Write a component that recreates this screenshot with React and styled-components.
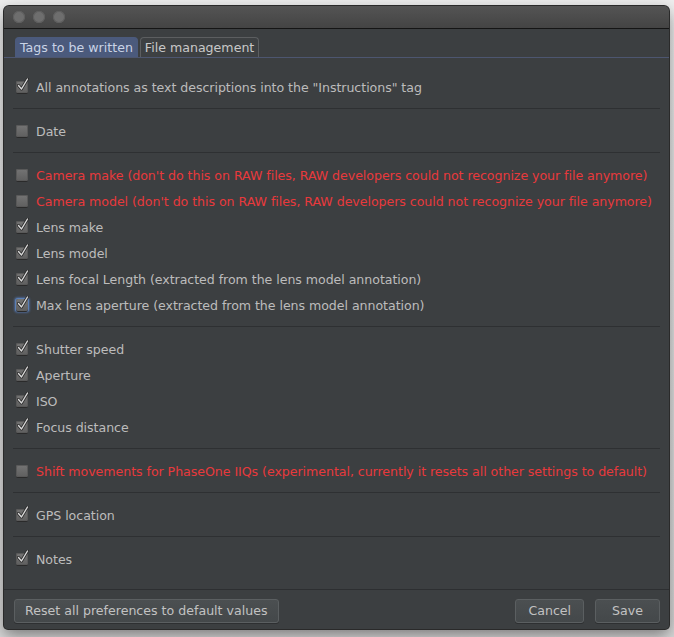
import React from "react";
import styled, { createGlobalStyle } from "styled-components";

const GlobalStyle = createGlobalStyle`
  html, body {
    margin: 0;
    padding: 0;
    background: #e6e6e6;
  }
  body {
    font-family: "DejaVu Sans", "Liberation Sans", sans-serif;
  }
`;

const Desk = styled.div`
  width: 674px;
  height: 637px;
  padding: 6px 5px 0 4px;
  box-sizing: border-box;
  background: linear-gradient(#eeeeee, #d9d9d9);
`;

const Window = styled.div`
  width: 665px;
  height: 623px;
  display: flex;
  flex-direction: column;
  background: #3c3f41;
  border-radius: 5px 5px 4px 4px;
  overflow: hidden;
  box-shadow: 0 0 0 1px #2a2a2a, 0 6px 16px rgba(0, 0, 0, 0.45);
`;

const TitleBar = styled.div`
  height: 22px;
  flex: none;
  display: flex;
  align-items: center;
  gap: 8px;
  padding-left: 9px;
  background: linear-gradient(#545454, #444444);
  border-bottom: 1px solid #151515;
`;

const Light = styled.span`
  width: 12px;
  height: 12px;
  border-radius: 50%;
  background: #6e6e6e;
  box-shadow: inset 0 0 0 1px #5e5e5e;
`;

const TabStrip = styled.div`
  display: flex;
  align-items: flex-end;
  gap: 2px;
  padding: 8px 0 0 11px;
  border-bottom: 1px solid #4d5670;
`;

const Tab = styled.div`
  height: 19px;
  padding: 0 4px;
  display: flex;
  align-items: center;
  font-size: 12.6px;
  color: ${(p) => (p.$active ? "#c9d3e6" : "#c8c8c8")};
  background: ${(p) => (p.$active ? "#4b5a7c" : "#3d4042")};
  border: 1px solid ${(p) => (p.$active ? "#4b5a7c" : "#5c5e60")};
  border-bottom: none;
  border-radius: 4px 4px 0 0;
`;

const Panel = styled.div`
  flex: 1;
  padding: 16px 9px 0 9px;
  border-bottom: 1px solid #2d2f31;
`;

const Group = styled.div`
  display: flex;
  flex-direction: column;
  padding: 0 0 8px;
  margin-bottom: 9px;
  border-bottom: 1px solid #2e3032;
  &:last-child {
    border-bottom: none;
  }
`;

const Row = styled.label`
  height: 26px;
  display: flex;
  align-items: center;
  gap: 8px;
  padding-left: 3px;
  font-size: 12.6px;
  letter-spacing: -0.05px;
  white-space: nowrap;
  color: ${(p) => (p.$warn ? "#e8393c" : "#bcbcbc")};
`;

const Box = styled.span`
  width: 12px;
  height: 12px;
  flex: none;
  position: relative;
  border-radius: 2px;
  background: linear-gradient(#747474, #5f5f5f);
  box-shadow: 0 1px 0 #2a2a2a,
    ${(p) =>
      p.$focus
        ? "0 0 0 1px #5a7fb5, 0 0 2px 2px rgba(90, 130, 200, 0.55)"
        : "inset 0 0 0 1px #595959"};
  svg {
    position: absolute;
    left: 1px;
    top: -3px;
  }
`;

const Footer = styled.div`
  height: 41px;
  flex: none;
  display: flex;
  align-items: center;
  padding: 0 9px 2px 10px;
`;

const Button = styled.button`
  height: 24px;
  padding: 0 ${(p) => p.$pad || 10}px;
  margin-left: ${(p) => p.$gap || 0}px;
  font-family: inherit;
  font-size: 12.6px;
  color: #c2c2c2;
  background: linear-gradient(#4b4f51, #44484a);
  border: 1px solid #5b5f61;
  border-radius: 3px;
  box-shadow: 0 1px 0 #2e3032;
`;

const Spacer = styled.div`
  flex: 1;
`;

const Check = () => (
  <svg width="12" height="13" viewBox="0 0 12 13">
    <path
      d="M1.5 7.5 L4.5 11 L10.5 1"
      fill="none"
      stroke="#2b2b2b"
      strokeWidth="3"
      strokeLinecap="round"
      strokeLinejoin="round"
    />
    <path
      d="M1.5 7.5 L4.5 11 L10.5 1"
      fill="none"
      stroke="#d8d8d8"
      strokeWidth="1.4"
      strokeLinecap="round"
      strokeLinejoin="round"
    />
  </svg>
);

const groups = [
  [{ text: 'All annotations as text descriptions into the "Instructions" tag', on: true }],
  [{ text: "Date" }],
  [
    { text: "Camera make (don't do this on RAW files, RAW developers could not recognize your file anymore)", warn: true },
    { text: "Camera model (don't do this on RAW files, RAW developers could not recognize your file anymore)", warn: true },
    { text: "Lens make", on: true },
    { text: "Lens model", on: true },
    { text: "Lens focal Length (extracted from the lens model annotation)", on: true },
    { text: "Max lens aperture (extracted from the lens model annotation)", on: true, focus: true },
  ],
  [
    { text: "Shutter speed", on: true },
    { text: "Aperture", on: true },
    { text: "ISO", on: true },
    { text: "Focus distance", on: true },
  ],
  [{ text: "Shift movements for PhaseOne IIQs (experimental, currently it resets all other settings to default)", warn: true }],
  [{ text: "GPS location", on: true }],
  [{ text: "Notes", on: true }],
];

export default function App() {
  return (
    <Desk>
      <GlobalStyle />
      <Window>
        <TitleBar>
          <Light />
          <Light />
          <Light />
        </TitleBar>
        <TabStrip>
          <Tab $active>Tags to be written</Tab>
          <Tab>File management</Tab>
        </TabStrip>
        <Panel>
          {groups.map((g, i) => (
            <Group key={i}>
              {g.map((item) => (
                <Row key={item.text} $warn={item.warn}>
                  <Box $focus={item.focus}>{item.on && <Check />}</Box>
                  {item.text}
                </Row>
              ))}
            </Group>
          ))}
        </Panel>
        <Footer>
          <Button>Reset all preferences to default values</Button>
          <Spacer />
          <Button $pad={12}>Cancel</Button>
          <Button $pad={16} $gap={11}>Save</Button>
        </Footer>
      </Window>
    </Desk>
  );
}
